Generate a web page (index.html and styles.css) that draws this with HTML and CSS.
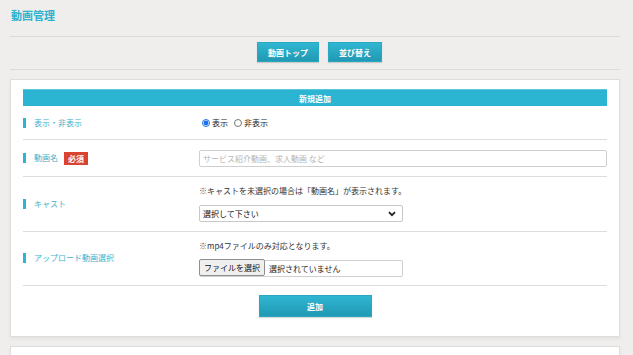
FILE: index.html
```html
<!DOCTYPE html>
<html lang="ja">
<head>
<meta charset="utf-8">
<title>動画管理</title>
<link rel="stylesheet" href="styles.css">
</head>
<body>
<div class="page">
  <h1 class="title">動画管理</h1>
  <div class="toolbar">
    <a class="btn">動画トップ</a>
    <a class="btn">並び替え</a>
  </div>
  <section class="card">
    <div class="card-head">新規追加</div>
    <div class="row">
      <div class="label">表示・非表示</div>
      <div class="field radios">
        <label class="radio"><input type="radio" name="disp" checked>表示</label>
        <label class="radio"><input type="radio" name="disp">非表示</label>
      </div>
    </div>
    <div class="row">
      <div class="label">動画名<span class="req">必須</span></div>
      <div class="field">
        <div class="text-input">サービス紹介動画、求人動画 など</div>
      </div>
    </div>
    <div class="row tall cast">
      <div class="label">キャスト</div>
      <div class="field">
        <p class="note"><span class="mark">※</span>キャストを未選択の場合は「動画名」が表示されます。</p>
        <div class="select"><span>選択して下さい</span>
          <svg class="chev" width="8" height="6" viewBox="0 0 8 6"><path d="M1 1.2 L4 4.2 L7 1.2" fill="none" stroke="#222" stroke-width="1.8"/></svg>
        </div>
      </div>
    </div>
    <div class="row tall upload">
      <div class="label">アップロード動画選択</div>
      <div class="field">
        <p class="note"><span class="mark">※</span>mp4ファイルのみ対応となります。</p>
        <div class="file"><span class="file-btn">ファイルを選択</span><span class="file-name">選択されていません</span></div>
      </div>
    </div>
    <div class="actions">
      <a class="btn submit">追加</a>
    </div>
  </section>
  <section class="card next"></section>
</div>
</body>
</html>
```

FILE: styles.css
```css
html, body {
  margin: 0;
  padding: 0;
  background: #efeeec;
  font-family: "Noto Sans CJK JP", "Noto Sans", sans-serif;
  font-size: 8px;
  color: #333;
  font-variant-emoji: text;
}
.page {
  padding: 0 13px 0 10px;
}
.title {
  margin: 0;
  box-sizing: border-box;
  height: 37px;
  padding: 8px 0 0 1px;
  font-size: 11px;
  line-height: 15px;
  font-weight: bold;
  color: #2db1ce;
  border-bottom: 1px solid #dcdbd9;
}
.toolbar {
  box-sizing: border-box;
  height: 33px;
  padding-top: 5px;
  display: flex;
  justify-content: center;
  gap: 9px;
  padding-left: 9px;
  border-bottom: 1px solid #dcdbd9;
}
.btn {
  display: flex;
  align-items: center;
  justify-content: center;
  height: 20px;
  padding: 0 10px;
  color: #fff;
  font-weight: bold;
  font-size: 8px;
  background: linear-gradient(#30b6d1, #2199b4);
  border: 1px solid #2aa8c2;
  box-sizing: border-box;
  box-shadow: 0 1px 1px rgba(0,0,0,.15);
}
.card {
  margin-top: 9px;
  background: #fff;
  border: 1px solid #dedddb;
  padding: 9px 12px 0 12px;
  box-shadow: 0 2px 3px rgba(0,0,0,.05);
}
.card-head {
  height: 17px;
  background: #2bb5d3;
  color: #fff;
  font-weight: bold;
  text-align: center;
  line-height: 17px;
  font-size: 8px;
  border-top: 1px solid #5cc8de;
  box-sizing: border-box;
}
.row {
  display: grid;
  grid-template-columns: 176px 1fr;
  align-items: center;
  min-height: 34px;
  border-bottom: 1px solid #dddddd;
  box-sizing: border-box;
}
.row + .row { min-height: 37px; }
.row.tall { padding: 2px 0 3px; }
.row.cast { min-height: 55px; }
.row.upload { min-height: 54px; }
.label {
  display: flex;
  align-items: center;
  color: #43b1cb;
  line-height: 12px;
}
.label::before {
  content: "";
  width: 3px;
  height: 10px;
  background: #2bb5d3;
  margin-right: 8px;
}
.req {
  margin-left: 6px;
  background: #d9432f;
  color: #fff;
  padding: 0 4px;
  line-height: 13px;
  font-weight: bold;
}
.radios {
  display: flex;
  align-items: center;
  gap: 6px;
  padding-left: 3px;
}
.radio {
  display: flex;
  align-items: center;
  color: #222;
}
.radio input {
  width: 8px;
  height: 8px;
  margin: 0 2px 0 0;
  accent-color: #1a73e8;
}
.text-input {
  height: 17px;
  box-sizing: border-box;
  border: 1px solid #cfcfcf;
  border-radius: 2px;
  padding: 0 3px;
  line-height: 15px;
  color: #b4b4b4;
}
.note {
  margin: 0 0 8px;
  line-height: 12px;
  color: #333;
}
.mark {
  font-family: "Noto Sans CJK JP", "DejaVu Sans", sans-serif;
  color: #555;
}
.select {
  width: 204px;
  height: 17px;
  box-sizing: border-box;
  border: 1px solid #c8c8c8;
  border-radius: 2px;
  display: flex;
  align-items: center;
  justify-content: space-between;
  padding: 0 6px 0 3px;
  color: #111;
}
.file {
  width: 204px;
  height: 17px;
  box-sizing: border-box;
  border: 1px solid #cfcfcf;
  border-radius: 2px;
  display: flex;
  align-items: center;
}
.file-btn {
  height: 17px;
  box-sizing: border-box;
  margin: -1px 0 0 -1px;
  padding: 0 4px;
  background: #efefef;
  border: 1px solid #8f8f8f;
  border-radius: 2px;
  line-height: 15px;
  color: #111;
}
.file-name {
  padding-left: 4px;
  color: #222;
}
.actions {
  display: flex;
  justify-content: center;
  padding: 9px 0 19px;
}
.btn.submit {
  width: 113px;
  height: 22px;
  padding: 0;
}
.card.next {
  height: 20px;
}
```
